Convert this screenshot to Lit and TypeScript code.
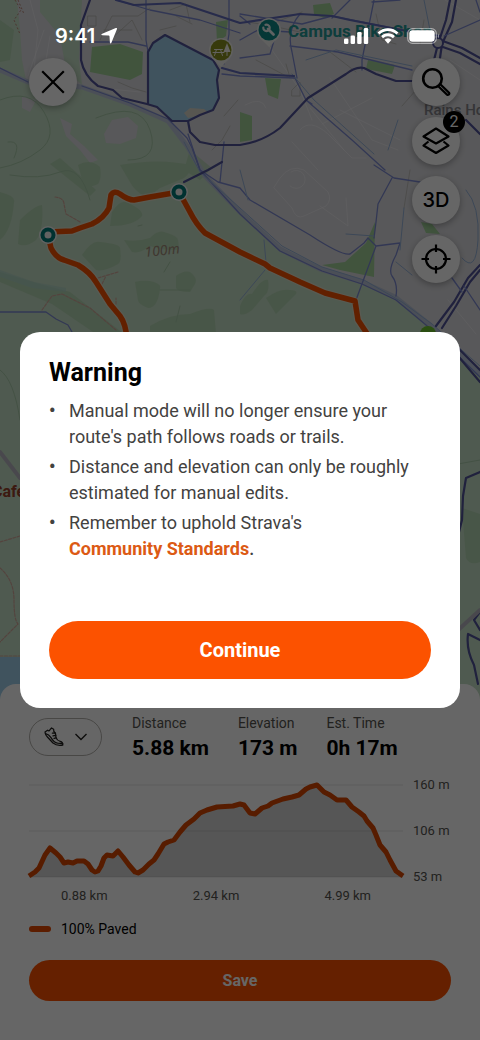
import { LitElement, html, svg, css } from "lit";
import { customElement, property } from "lit/decorators.js";

type Point = [number, number];

const ELEVATION: Point[] = [
  [0, 99], [6, 95], [10, 91], [16, 78], [21, 71], [27, 76], [31, 80], [35, 86], [39, 85], [44, 86],
  [48, 84], [55, 84], [59, 87], [63, 93], [66, 95], [69, 94], [72, 89], [75, 81], [78, 78], [84, 79],
  [89, 74], [94, 80], [100, 88], [106, 95], [109, 96], [114, 93], [120, 87], [125, 83], [129, 77],
  [135, 67], [139, 65], [145, 63], [151, 55], [157, 48], [165, 42], [171, 36], [178, 33], [188, 30],
  [204, 29], [211, 27], [215, 28], [221, 36], [226, 37], [233, 31], [239, 29], [243, 26], [254, 22],
  [263, 20], [270, 18], [277, 12], [281, 10], [288, 8], [295, 15], [301, 18], [308, 23], [317, 23],
  [323, 30], [330, 35], [335, 39], [338, 44], [344, 51], [347, 58], [351, 68], [357, 75], [361, 83],
  [367, 94], [374, 99],
];

const STATS = [
  { label: "Distance", value: "5.88 km" },
  { label: "Elevation", value: "173 m" },
  { label: "Est. Time", value: "0h 17m" },
];

@customElement("route-map")
export class RouteMap extends LitElement {
  static styles = css`
    :host { display: block; }
    .map { display: block; width: 100%; height: 100%; }
    .line { fill: none; stroke-linejoin: round; stroke-linecap: round; }
    .wood { fill: #a5cfa4; opacity: 0.55; }
    .park { fill: #a2d29a; }
    .street { stroke: #f3f2f6; stroke-width: 1; opacity: 0.6; }
    .alley { stroke: #b5b3ae; stroke-width: 1; opacity: 0.7; }
    .cycle { stroke: #7e8bd2; stroke-width: 1.3; }
    .cycle-bold { stroke: #626cbc; stroke-width: 2.2; }
    .cycle-light { stroke: #97b3da; stroke-width: 1; }
    .heat { stroke: #50539a; stroke-width: 2.2; }
    .casing { stroke: #bcc6da; stroke-width: 5; }
    .trail { stroke: #d0a99c; stroke-width: 1.2; stroke-dasharray: 3 1.5; }
    .contour { stroke: #a9ccab; stroke-width: 1; }
    .route-edge { stroke: #efe3d2; stroke-width: 8; opacity: 0.6; }
    .route { stroke: #f45200; stroke-width: 5.5; }
    .place { font: 700 17px "Roboto", "Liberation Sans", sans-serif; fill: #259a97; }
    .area { font: 500 15px "Roboto", "Liberation Sans", sans-serif; fill: #85858b; }
    .cafe { font: 700 16px "Roboto", "Liberation Sans", sans-serif; fill: #96402a; }
    .height { font: italic 400 14px "Noto Sans", sans-serif; fill: #a08a78; }
  `;

  private waypoint(x: number, y: number) {
    return svg`
      <circle cx=${x} cy=${y} r="9" fill="#f4f4f4"></circle>
      <circle cx=${x} cy=${y} r="7.5" fill="#007a78"></circle>
      <circle cx=${x} cy=${y} r="3.5" fill="#f4f4f4"></circle>`;
  }

  render() {
    return html`
      <svg class="map" viewBox="0 0 480 1040" preserveAspectRatio="xMidYMin slice" role="img" aria-label="Route map">
        <rect width="480" height="1040" fill="#dcdce0"></rect>
        <path fill="#c6e0c7" d="M0 66L28 81L82 86L130 104L168 121L184 143L205 175L240 211L280 247L320 269L362 282L395 297L430 325L480 372V1040H0Z"></path>
        <path fill="#c6e0c7" d="M0 0H17L20 30L22 60L26 80L0 68ZM40 0H82L79 60L82 85L66 70L60 36L40 12Z"></path>
        <path fill="#dcdce0" d="M104 134L112 120L128 117L138 126L136 138L120 144L106 143ZM60 118L72 124L70 134L84 146L98 160L90 163L80 150L66 136ZM22 96L36 100L30 112L22 108Z"></path>
        <path class="park" d="M92 47L120 44L143 52L142 74L130 80L90 72ZM216 22L228 20L226 36L217 42ZM265 78L281 79L278 99L268 95ZM313 5L330 3L334 14L324 18L314 14ZM368 60L395 65L392 74L366 69ZM375 222L374 277L340 270L322 265L345 262L366 243ZM240 112L252 116L252 140L240 142ZM421 222L432 224L440 234L426 233Z"></path>
        <path class="wood" d="M0 20L14 30L10 60L0 62ZM78 165Q90 158 100 167Q102 178 98 184Q90 188 84 186ZM120 165Q160 158 190 165Q192 172 184 178L160 188Q150 196 144 196Q134 190 130 182ZM0 192Q16 196 14 202Q12 230 0 240ZM20 220Q34 206 42 205Q44 230 36 240Q26 248 18 244ZM112 212Q120 200 126 202Q144 210 142 216Q134 226 110 226ZM82 255Q92 240 100 242Q120 244 120 248Q122 262 118 264Q104 272 96 270ZM124 240Q138 242 150 238Q158 230 164 232Q178 236 178 240Q180 250 176 250Q160 250 150 246Q140 254 132 252ZM135 282Q142 280 150 281Q162 284 160 288Q158 308 148 308Q138 304 138 300ZM176 276Q184 270 190 272Q198 278 195 284L190 292Q178 292 176 288ZM150 326Q170 314 190 314Q210 306 214 310L216 334H150ZM240 306Q246 292 252 294Q262 278 268 280Q270 292 264 296L252 310Q244 316 240 314ZM266 298Q280 288 290 290Q298 290 296 294L276 314ZM60 158L96 190L90 196L50 164ZM462 508L480 514V562Q470 566 466 558ZM190 150L212 168L200 180L184 170Z"></path>
        <path class="wood" d="M0 272L40 284L70 292L124 334H96L52 304L0 282Z"></path>
        <path fill="#aed3c8" opacity=".6" d="M0 270L34 282L66 288L66 292L32 288L0 277Z"></path>
        <path class="line contour" d="M0 100Q30 88 44 112T40 150T0 168M10 175Q40 180 60 172T90 200M0 370Q14 380 20 420M96 118Q140 100 150 130T128 160M8 142Q22 140 14 158"></path>

        <path fill="#a0cfea" d="M148 52L153 43L165 35L213 60L219 70L217 80L219 98L213 110L200 115L186 121L172 121L165 113L157 107L147 103Z"></path>
        <path fill="#d9d6cb" d="M184 113L190 108L204 109L208 112L198 116L188 118Z"></path>
        <path fill="#a0cfea" d="M0 657H20V700H0Z"></path>

        <path class="line street" d="M30 0L38 30L34 70M44 30L28 76M50 36L46 60M100 88L140 92M258 30L300 90L312 120M330 78L372 140L398 150M310 108L344 150M292 142L318 170M300 130Q310 118 328 134L352 158L366 158M280 178Q290 164 304 170L328 192Q332 200 326 206L304 216Q296 220 292 208L274 188ZM291 172a9 9 0 1 1 -1 14M346 198L348 226L320 206M340 110L400 140M322 124L372 98M245 105Q262 96 266 108M445 0L480 20M450 60L480 80M454 110L430 160M448 300L476 334"></path>
        <path class="line alley" d="M88 16H96V26H88ZM100 40L112 16H138L150 8M110 40L132 20L142 40M104 30H132M170 10L186 4L190 22M176 16L192 24M160 30L176 26M248 22L272 26L300 32M256 60L290 78L286 64M292 90L300 82V96H292ZM376 14L382 40L396 44M424 20L420 44M118 82L132 88L146 92M224 116L238 100M230 126L222 140L212 150M402 106L416 90M410 170L404 208M330 52L356 72M266 40L276 22L302 12"></path>
        <path fill="none" stroke="#bc8a7c" stroke-dasharray="2 2" d="M15 0L21 10L14 20L20 34M18 0L24 14"></path>

        <path class="line casing" d="M0 70L28 82L82 87L130 104L168 121L187 146L205 176L240 212L280 249L320 269L362 282L395 297L430 325L480 373"></path>
        <path class="line cycle" d="M0 68L28 82M82 86L130 103L168 119L187 138L192 148L200 170L240 214L280 251L322 271L362 284L396 300L426 325L480 377"></path>
        <path class="line cycle-light" d="M184 142L200 172L240 208L282 246L322 267L364 280L402 302L432 324L480 366"></path>
        <path class="line cycle" d="M116 0L150 10L200 20L240 33M146 0V40L148 52M90 42H128L146 46M222 74L240 76L295 78M229 0V34L224 64M240 40L258 30L290 32M240 58L270 54L276 34M294 76L306 100L352 140L385 170M300 14Q286 30 292 52L297 78M240 14L302 24L332 16L412 32M332 18L350 0M374 0L362 60V70M306 100L312 104M290 46L338 52L412 70M240 16L250 24M188 134L200 170L218 182L240 188L250 200L310 235Q342 256 350 254L364 243L368 238M392 178L378 204L376 222L374 238M374 165L394 178L420 182M368 238L376 246L400 243L396 255Q388 270 392 276Q398 284 396 296M376 246L356 300M220 182L224 142"></path>
        <path class="line cycle-light" d="M292 74L314 100L374 154M306 60L336 50L412 66M404 208L400 250M396 262L412 275M240 170L248 200M264 240L266 262M398 120L388 150M430 30L424 0M466 190Q480 206 478 240T462 258M346 234L374 236M265 270L240 300"></path>
        <path class="line cycle-bold" d="M116 0L134 5L180 3L240 23L300 14L332 16L350 20L412 32L440 36M222 68L240 73L294 76"></path>
        <path class="line heat" d="M90 0L81 25V60Q84 76 98 86L113 90L122 98L147 104L157 107L172 121L188 121L190 132L200 142L215 145L240 145Q262 142 280 128L308 98L346 74Q356 66 364 68L376 74L396 81H412M148 52V103M148 52L153 43L165 35L213 60L219 70L217 80L219 98L213 110L200 115L188 121M184 182L208 170L222 162M450 0L446 20L438 44L434 60M456 0L452 22L442 44L440 58M440 40L462 48L480 58M440 46L460 53L480 64M466 120L480 134M480 265L468 278L454 302L436 326M480 270L470 282L456 306L442 328"></path>
        <path class="line cycle" d="M400 0L372 2M476 0L480 12M444 36L480 20M0 312H46L56 319L68 325L72 332M464 286L480 310M452 278L462 292"></path>
        <path class="line heat" d="M458 348L480 370M458 356L480 382M480 472L466 478L463 496L462 520L457 540M480 612L474 620L480 630M480 640L468 634Q466 650 474 665L478 684"></path>
        <circle cx="438" cy="43" r="5" fill="#dcdce0" stroke="#50539a" stroke-width="2"></circle>
        <path class="line" stroke="#b7b5c0" stroke-width="4" d="M0 452L20 478M456 632L480 610"></path>
        <path class="line trail" d="M55 197Q64 198 64 204L66 214L80 222M42 310L52 296L62 294L90 308L116 330M98 278L118 272M102 284L106 276M116 304V298M0 542L20 536M0 568Q14 580 14 600T18 624L0 642M0 656H20"></path>
        <path class="line contour" d="M138 226l4 -1M160 290H190M164 272L170 262M180 306L176 322M458 464L480 460"></path>

        <text class="height" x="145" y="257" transform="rotate(-6 145 257)">100m</text>
        <path class="line route-edge" d="M48 232L72 231L80 228L92 224Q104 218 109 208L111 195Q114 190 120 194Q128 200 134 200L150 197L179 192L190 212Q196 224 205 233L240 252L265 264L270 268L300 282L325 293L355 301L358 320L370 338M48 235L51 248Q56 258 64 260L78 265Q90 272 96 282L110 304L120 316Q126 324 127 340"></path>
        <path class="line route" d="M48 232L72 231L80 228L92 224Q104 218 109 208L111 195Q114 190 120 194Q128 200 134 200L150 197L179 192L190 212Q196 224 205 233L240 252L265 264L270 268L300 282L325 293L355 301L358 320L370 338M48 235L51 248Q56 258 64 260L78 265Q90 272 96 282L110 304L120 316Q126 324 127 340M404 338Q410 332 416 338"></path>
        <circle cx="428" cy="334" r="8" fill="#6cc22d"></circle>
        ${this.waypoint(48, 235)} ${this.waypoint(179, 192)}

        <path fill="#f1f1ee" d="M221 67L212 58H230Z"></path>
        <circle cx="221" cy="50" r="12" fill="#f1f1ee"></circle>
        <circle cx="221" cy="50" r="10.5" fill="#8a9220"></circle>
        <path class="line" stroke="#f7f4ec" d="M214.500 49.500H222.500M213 52.500H224M216.500 49.500L214.500 55.500M220.500 49.500L222.500 55.500M227 50V55.500"></path>
        <path fill="#f7f4ec" d="M227 43L230.500 52H223.500Z"></path>
        <path fill="#f1f1ee" d="M269 47L260 38H278Z"></path>
        <circle cx="269" cy="30" r="12" fill="#f1f1ee"></circle>
        <circle cx="269" cy="30" r="10.500" fill="#0e8a88"></circle>
        <path class="line" stroke="#eef6f5" stroke-width="2.800" d="M268 29L273.500 34.500"></path>
        <path class="line" stroke="#eef6f5" stroke-width="2.200" d="M265.500 24.800A3.200 3.200 0 1 1 263.300 27.500"></path>
        <text class="place" x="288" y="37">Campus Bike Shop</text>
        <text class="area" x="424" y="115">Rains Ho</text>
        <text class="cafe" x="-8" y="497">Cafe</text>
      </svg>`;
  }
}

@customElement("status-bar")
export class StatusBar extends LitElement {
  static styles = css`
    :host { display: flex; align-items: center; justify-content: space-between; padding: 24px 40px 0 55px; height: 24px; color: #fff; }
    .side { display: flex; align-items: center; gap: 5px; }
    .signals { gap: 8px; }
    .time { font: 600 20px/24px "Inter", sans-serif; }
    svg { display: block; }
  `;

  render() {
    return html`
      <div class="side">
        <span class="time">9:41</span>
        <svg width="18" height="18" viewBox="0 0 18 18" fill="#fff" aria-hidden="true">
          <path d="M15.800 1.100Q17.500 .5 16.900 2.200L11.400 15.700Q10.500 17.300 9.900 15.500L9.500 9.300Q9.400 8.500 8.600 8.500L2.200 8.200Q.4 7.700 2.200 6.700Z"></path>
        </svg>
      </div>
      <div class="side signals">
        <svg width="25" height="16" viewBox="0 0 25 16" fill="#fff" role="img" aria-label="Signal">
          <rect x="0" y="10.500" width="4.400" height="5.500" rx="1.300"></rect>
          <rect x="6.600" y="7.500" width="4.400" height="8.500" rx="1.300"></rect>
          <rect x="13.200" y="4" width="4.400" height="12" rx="1.300"></rect>
          <rect x="19.800" y="0" width="4.400" height="16" rx="1.300"></rect>
        </svg>
        <svg width="22" height="16" viewBox="0 0 22 16" fill="#fff" role="img" aria-label="Wi-Fi">
          <path d="M11 .3C15 .3 18.700 1.800 21.400 4.500L19.500 6.600C17.200 4.300 14.200 3.100 11 3.100S4.800 4.300 2.500 6.600L.6 4.500C3.300 1.800 7 .3 11 .3Z"></path>
          <path d="M11 5.300C13.600 5.300 16 6.300 17.900 8.100L16 10.200C14.600 8.900 12.900 8.200 11 8.200S7.400 8.900 6 10.200L4.100 8.100C6 6.300 8.400 5.300 11 5.300Z"></path>
          <path d="M11 10.300Q13 10.300 14.500 11.800L11 15.700L7.500 11.800Q9 10.300 11 10.300Z"></path>
        </svg>
        <svg width="33" height="16" viewBox="0 0 33 16" role="img" aria-label="Battery">
          <rect x=".7" y=".7" width="28.600" height="14.600" rx="4.800" fill="none" stroke="#fff" stroke-opacity=".5" stroke-width="1.200"></rect>
          <rect x="2.300" y="2.300" width="25.400" height="11.400" rx="3.300" fill="#fff"></rect>
          <path fill="#fff" fill-opacity=".5" d="M31 5.500Q33 8 31 10.500Z"></path>
        </svg>
      </div>`;
  }
}

@customElement("map-controls")
export class MapControls extends LitElement {
  static styles = css`
    :host { display: flex; justify-content: space-between; align-items: flex-start; padding: 58px 20px 0 29px; }
    .tools { display: grid; gap: 11px; }
    .round {
      position: relative; display: grid; place-items: center; width: 48px; height: 48px; padding: 0;
      border: 0; border-radius: 50%; background: #fff; color: #000; box-shadow: 0 2px 6px rgba(0, 0, 0, 0.3);
      font: 500 20px/24px "Inter", sans-serif;
    }
    .badge {
      position: absolute; top: -6px; right: -5px; width: 22px; height: 22px; border-radius: 50%;
      background: #000; color: #fff; font: 400 16px/22px "Roboto", sans-serif; text-align: center;
    }
    svg { display: block; fill: none; stroke: #000; stroke-width: 2.2; }
  `;

  render() {
    return html`
      <button class="round" aria-label="Close">
        <svg width="24" height="24" viewBox="0 0 24 24"><path d="M1.200 1.200L22.800 22.800M22.800 1.200L1.200 22.800"></path></svg>
      </button>
      <div class="tools">
        <button class="round" aria-label="Search">
          <svg width="30" height="30" viewBox="0 0 30 30">
            <circle cx="11.500" cy="11.500" r="9.300" stroke-width="2.600"></circle>
            <path d="M18.800 16.800L28 25.600Q28.700 26.600 27.900 27.500Q26.900 28.300 26 27.600L16.800 18.800" stroke-width="2.200"></path>
          </svg>
        </button>
        <button class="round" aria-label="Map layers, 2 active">
          <svg width="30" height="30" viewBox="0 0 30 30" stroke-linejoin="round">
            <path d="M15 2.500L27.500 10.500L15 17.500L2.500 10.500ZM7.500 15.500L2.500 19.500L15 27L27.500 19.500L22.500 15.500"></path>
          </svg>
          <span class="badge">2</span>
        </button>
        <button class="round">3D</button>
        <button class="round" aria-label="My location">
          <svg width="30" height="30" viewBox="0 0 30 30">
            <circle cx="15" cy="15" r="10"></circle>
            <path d="M15 .5V8M15 22V29.500M.5 15H8M22 15H29.500"></path>
          </svg>
        </button>
      </div>`;
  }
}

@customElement("route-sheet")
export class RouteSheet extends LitElement {
  @property({ attribute: false }) points: Point[] = ELEVATION;

  static styles = css`
    :host {
      display: block; padding: 29px 29px 39px; border-radius: 16px 16px 0 0; background: #fff;
      color: #000; font: 400 14px/20px "Roboto", "Liberation Sans", sans-serif;
    }
    .summary { display: flex; align-items: center; gap: 30px; }
    .sport {
      display: flex; align-items: center; justify-content: center; gap: 10px; width: 73px; height: 38px;
      padding: 0; border: 1px solid #b4b2ad; border-radius: 19px; background: none;
    }
    .stats { display: flex; gap: 29px; margin: 0; }
    .label { color: #55544f; line-height: 20px; }
    .value { margin: 2px 0 0; font-size: 21px; font-weight: 700; line-height: 26px; }
    .chart { display: grid; grid-template-columns: 1fr 38px; column-gap: 10px; row-gap: 3px; margin-top: 16px; color: #55544f; font-size: 13px; line-height: 16px; }
    .plot { display: block; width: 100%; height: 108px; overflow: visible; }
    .axis { display: flex; justify-content: space-between; white-space: nowrap; }
    .heights { flex-direction: column; }
    .distances { padding: 0 32px; }
    .legend { display: flex; align-items: center; gap: 10px; margin-top: 15px; }
    .swatch { width: 22px; height: 6px; border-radius: 3px; background: #e64a00; }
    .save {
      display: block; width: 100%; height: 41px; margin-top: 21px; padding: 0; border: 0; border-radius: 21px;
      background: #fc5200; color: #fff; font: 700 16px/24px "Roboto", "Liberation Sans", sans-serif;
    }
  `;

  render() {
    const line = this.points.map(([x, y]) => `${x},${y}`).join(" ");
    return html`
      <div class="summary">
        <button class="sport" aria-label="Sport: trail run" aria-haspopup="listbox">
          <svg width="20" height="20" viewBox="0 0 20 20" fill="none" stroke="#22211f" stroke-width="1.300" stroke-linejoin="round" stroke-linecap="round" aria-hidden="true">
            <path d="M1 5L3.600 3.200Q5.400 4.600 6 2.600L7.600 1L9.600 2.200Q9.200 4.600 11.400 6.200L12 10.600Q13 13.600 16.200 14.400Q19 15.200 18.800 18Q13 19.200 9 16L3.400 10Q1.400 8 1 5Z"></path>
            <path d="M1.400 6.600Q5 7.400 7 10.600Q9.800 15.600 13.600 16.200L18.600 16.600M8.400 6.200L11.200 6M9 8.800L11.800 8.400M10 11.400L12.200 10.800"></path>
          </svg>
          <svg width="14" height="8" viewBox="0 0 14 8" fill="none" stroke="#22211f" stroke-width="1.400" aria-hidden="true"><path d="M1.500 1L7 6.500L12.500 1"></path></svg>
        </button>
        <dl class="stats">
          ${STATS.map((s) => html`<div><dt class="label">${s.label}</dt><dd class="value">${s.value}</dd></div>`)}
        </dl>
      </div>
      <div class="chart">
        <svg class="plot" viewBox="0 0 374 108" preserveAspectRatio="none" role="img" aria-label="Elevation profile">
          <polygon points="0,100 ${line} 374,100" fill="#d8d8d8"></polygon>
          <path d="M0 8H374M0 54H374M0 100H374" stroke="#000" stroke-opacity=".1"></path>
          <polyline points=${line} fill="none" stroke="#d94800" stroke-width="5" stroke-linejoin="round"></polyline>
        </svg>
        <div class="axis heights"><span>160 m</span><span>106 m</span><span>53 m</span></div>
        <div class="axis distances"><span>0.88 km</span><span>2.94 km</span><span>4.99 km</span></div>
      </div>
      <div class="legend"><span class="swatch"></span>100% Paved</div>
      <button class="save">Save</button>`;
  }
}

@customElement("warning-dialog")
export class WarningDialog extends LitElement {
  static styles = css`
    :host { display: block; }
    .dialog {
      padding: 29px; border-radius: 20px; background: #fff; color: #43423f;
      font: 400 18px/26px "Roboto", "Liberation Sans", sans-serif;
    }
    .title { margin: 0; color: #000; font-size: 25px; font-weight: 700; line-height: 24px; }
    .notes { display: grid; gap: 4px; margin: 13px 0 0; padding: 0; list-style: none; }
    .note { display: flex; }
    .note::before { content: "•"; flex: 0 0 20px; font-weight: 700; }
    .link { display: inline-block; color: #dc5a14; font-weight: 700; text-decoration: none; }
    .stop { font-weight: 500; }
    .continue {
      display: block; width: 100%; height: 58px; margin-top: 59px; padding: 0; border: 0; border-radius: 29px;
      background: #fc5200; color: #fff; font: 700 20px/26px "Roboto", "Liberation Sans", sans-serif;
    }
  `;

  render() {
    return html`
      <section class="dialog" role="dialog" aria-modal="true" aria-labelledby="title">
        <h2 class="title" id="title">Warning</h2>
        <ul class="notes">
          <li class="note"><span>Manual mode will no longer ensure your route's path follows roads or trails.</span></li>
          <li class="note"><span>Distance and elevation can only be roughly estimated for manual edits.</span></li>
          <li class="note"><span>Remember to uphold Strava's <br><a class="link" href="#standards">Community Standards</a><span class="stop">.</span></span></li>
        </ul>
        <button class="continue">Continue</button>
      </section>`;
  }
}

@customElement("app-root")
export class AppRoot extends LitElement {
  static styles = css`
    :host { display: grid; min-height: 100vh; overflow: hidden; }
    .page, .scrim, .status { grid-area: 1 / 1; }
    .page { position: relative; display: flex; flex-direction: column; justify-content: space-between; }
    .map { position: absolute; inset: 0; }
    .controls, .sheet { position: relative; }
    .scrim { position: relative; display: grid; align-items: center; padding: 0 20px; background: rgba(0, 0, 0, 0.6); }
    .status { position: relative; align-self: start; }
  `;

  render() {
    return html`
      <main class="page">
        <route-map class="map"></route-map>
        <map-controls class="controls"></map-controls>
        <route-sheet class="sheet"></route-sheet>
      </main>
      <div class="scrim"><warning-dialog></warning-dialog></div>
      <status-bar class="status"></status-bar>`;
  }
}
